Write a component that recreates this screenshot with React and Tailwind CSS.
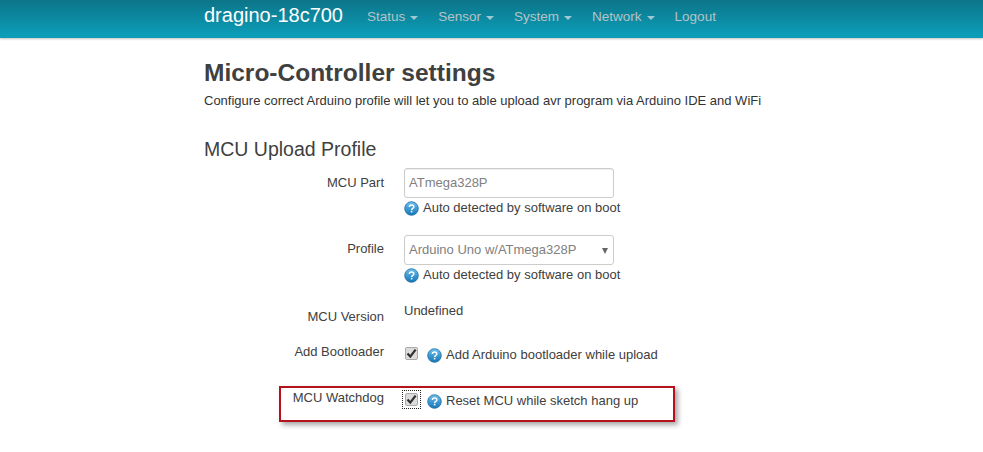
import React from "react";

function Help() {
  return (
    <svg width="15" height="15" viewBox="0 0 15 15" className="shrink-0">
      <defs>
        <linearGradient id="h" x1="0" y1="0" x2="0" y2="1">
          <stop offset="0" stopColor="#6cc0ee" />
          <stop offset="1" stopColor="#1476b8" />
        </linearGradient>
      </defs>
      <circle cx="7.5" cy="7.5" r="6.8" fill="url(#h)" stroke="#1a6a9e" strokeWidth="0.8" />
      <path d="M5.4 6c0-1.3 1-2 2.2-2s2.2.7 2.2 1.9c0 1.5-2.1 1.5-2.1 3" fill="none" stroke="#fff" strokeWidth="1.5" />
      <rect x="6.8" y="9.8" width="1.6" height="1.6" fill="#fff" />
    </svg>
  );
}

function Check({ focus }) {
  return (
    <span className={"flex h-[15px] w-[15px] items-center justify-center " + (focus ? "outline-1 outline-dotted outline-offset-1 outline-[#222]" : "")}>
      <span className="flex h-[13px] w-[13px] items-center justify-center rounded-[2px] border border-[#a9a9a9] bg-[#dcdcdc]">
        <svg width="11" height="11" viewBox="0 0 11 11">
          <path d="M1.5 5.5 4.3 8.6 9.6 1.6" fill="none" stroke="#2f2f2f" strokeWidth="2.2" />
        </svg>
      </span>
    </span>
  );
}

function NavItem({ children, caret = true }) {
  return (
    <span className="flex items-center gap-[5px] text-[13.5px] text-[#b4c4c6]">
      {children}
      {caret && <span className="mt-[1px] h-0 w-0 border-x-[4px] border-t-[4px] border-x-transparent border-t-[#9fc9d2]" />}
    </span>
  );
}

function Row({ label, labelClass = "", className = "", children }) {
  return (
    <div className={"flex " + className}>
      <div className={"w-[180px] text-right text-[#404040] " + labelClass}>{label}</div>
      <div className="ml-[20px] flex-1">{children}</div>
    </div>
  );
}

function HelpLine({ children }) {
  return (
    <div className="flex items-center gap-[4px] text-[#404040]">
      <Help />
      <span>{children}</span>
    </div>
  );
}

export default function App() {
  return (
    <div className="relative h-[452px] w-[983px] overflow-hidden bg-white font-['Liberation_Sans',Arial,sans-serif] text-[13px] text-[#404040]">
      <header className="flex h-[38px] items-start border-b border-[#0d9cb4] bg-gradient-to-b from-[#0c7589] to-[#0b9fba] pl-[204px] shadow-[0_1px_2px_rgba(0,0,0,0.25)]">
        <div className="mt-[3px] text-[20px] leading-[24px] text-white">dragino-18c700</div>
        <nav className="mt-[9px] ml-[24px] flex gap-[20px] leading-[16px]">
          <NavItem>Status</NavItem>
          <NavItem>Sensor</NavItem>
          <NavItem>System</NavItem>
          <NavItem>Network</NavItem>
          <NavItem caret={false}>Logout</NavItem>
        </nav>
      </header>

      <main className="pl-[204px]">
        <h1 className="mt-[21px] text-[24.5px] leading-[28px] font-bold text-[#404040]">Micro-Controller settings</h1>
        <p className="mt-[5px] leading-[18px] text-[#333]">Configure correct Arduino profile will let you to able upload avr program via Arduino IDE and WiFi</p>
        <h2 className="mt-[27px] text-[19.5px] leading-[24px] text-[#404040]">MCU Upload Profile</h2>
      </main>

      <section className="ml-[204px] mt-[7px] w-[560px]">
        <Row label="MCU Part" labelClass="pt-[6px] leading-[18px]" >
          <div className="flex h-[30px] w-[210px] items-center rounded-[3px] border border-[#cccccc] px-[4px] text-[#808080] shadow-[inset_0_1px_1px_rgba(0,0,0,0.075)]">ATmega328P</div>
          <div className="mt-[1px] leading-[18px]"><HelpLine>Auto detected by software on boot</HelpLine></div>
        </Row>
        <Row label="Profile" labelClass="pt-[5px] leading-[18px]" className="mt-[18px]">
          <div className="flex h-[30px] w-[210px] items-center justify-between rounded-[3px] border border-[#cccccc] pr-[5px] pl-[4px] text-[#808080]">
            <span>Arduino Uno w/ATmega328P</span>
            <span className="mt-[1px] h-0 w-0 border-x-[3.5px] border-t-[6px] border-x-transparent border-t-[#666]" />
          </div>
          <div className="mt-[1px] leading-[18px]"><HelpLine>Auto detected by software on boot</HelpLine></div>
        </Row>
        <Row label="MCU Version" labelClass="pt-[6px] leading-[18px]" className="mt-[18px]">
          <div className="leading-[18px]">Undefined</div>
        </Row>
        <Row label="Add Bootloader" labelClass="leading-[18px]" className="mt-[17px]">
          <div className="flex items-center">
            <Check />
            <span className="ml-[8px] mt-[3px] leading-[18px]"><HelpLine>Add Arduino bootloader while upload</HelpLine></span>
          </div>
        </Row>
        <Row label="MCU Watchdog" labelClass="leading-[18px]" className="mt-[25px]">
          <div className="flex items-center">
            <Check focus />
            <span className="ml-[8px] mt-[3px] leading-[18px]"><HelpLine>Reset MCU while sketch hang up</HelpLine></span>
          </div>
        </Row>
      </section>

      <div className="absolute top-[386px] left-[279px] h-[36px] w-[396px] border-2 border-[#b5121b] shadow-[3px_3px_5px_rgba(0,0,0,0.35)]" />
    </div>
  );
}
